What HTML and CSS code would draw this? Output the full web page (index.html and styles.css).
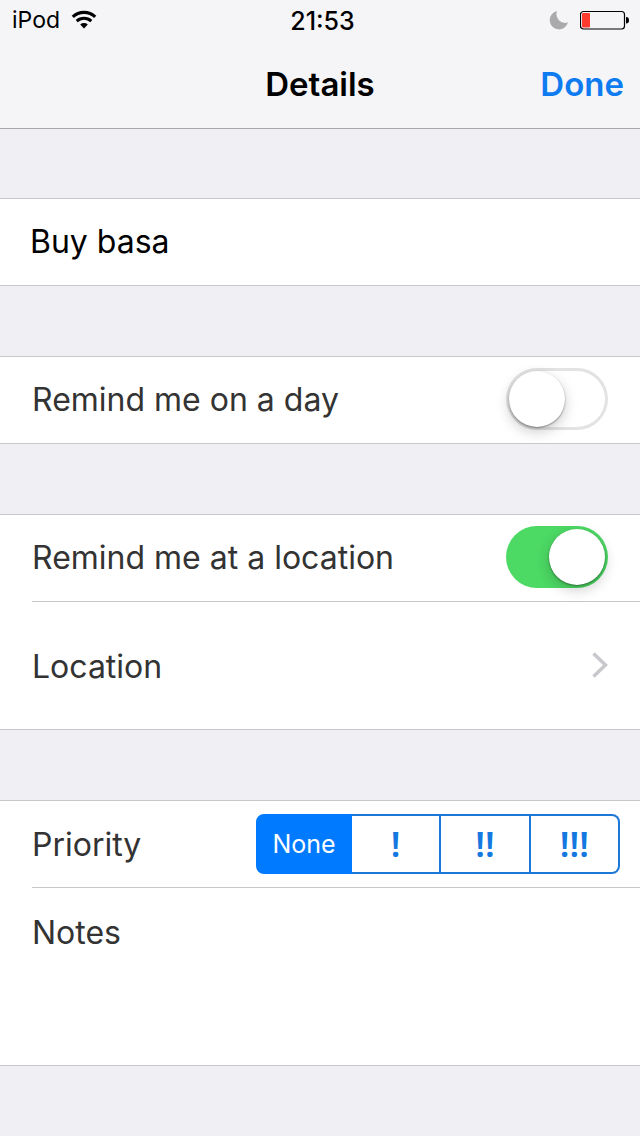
FILE: index.html
```html
<!DOCTYPE html>
<html lang="en">
<head>
<meta charset="utf-8">
<meta name="viewport" content="width=device-width, initial-scale=1">
<title>Details</title>
<link rel="stylesheet" href="styles.css">
</head>
<body>
<header class="header">
  <div class="status">
    <div class="status-left">
      <span>iPod</span>
      <svg class="wifi" width="26" height="20" viewBox="0 0 26 20" aria-hidden="true">
        <path d="M1.8 6.9a16.2 16.2 0 0 1 22.4 0" fill="none" stroke="#000" stroke-width="3.2"/>
        <path d="M5.7 11.1a10.6 10.6 0 0 1 14.6 0" fill="none" stroke="#000" stroke-width="3"/>
        <path d="M9.2 14.6a5.6 5.6 0 0 1 7.6 0L13 18.6z"/>
      </svg>
    </div>
    <time class="clock">21:53</time>
    <div class="status-right">
      <svg width="20" height="20" viewBox="0 0 20 20" aria-hidden="true">
        <path d="M8.1 1A9.3 9.3 0 1 0 19 12.3 8.6 8.6 0 0 1 8.1 1z" fill="#aaaaad"/>
      </svg>
      <svg width="50" height="20" viewBox="0 0 50 20" aria-hidden="true">
        <rect x="0.500" y="1.500" width="44" height="17.500" rx="3" fill="none" stroke="#000" stroke-width="1.2"/>
        <rect x="2" y="3" width="8" height="14.500" rx="1" fill="#ff3b30"/>
        <path d="M46 7q3 0 3 3.250t-3 3.250z"/>
      </svg>
    </div>
  </div>
  <nav class="navbar">
    <h1 class="title">Details</h1>
    <button class="done" type="button">Done</button>
  </nav>
</header>
<main class="form">
  <section class="group">
    <div class="row">
      <input class="name" type="text" value="Buy basa" aria-label="Title">
    </div>
  </section>
  <section class="group">
    <div class="row">
      <label class="label" for="day">Remind me on a day</label>
      <input class="switch" id="day" type="checkbox" role="switch">
    </div>
  </section>
  <section class="group">
    <div class="row">
      <label class="label" for="at-location">Remind me at a location</label>
      <input class="switch" id="at-location" type="checkbox" role="switch" checked>
    </div>
    <button class="row row-link" type="button">
      <span class="label">Location</span>
      <svg width="18" height="28" viewBox="0 0 18 28" aria-hidden="true">
        <path d="M3.500 1.500L15.500 13 3.500 24.500" fill="none" stroke="#c7c7cc" stroke-width="3.500"/>
      </svg>
    </button>
  </section>
  <section class="group">
    <div class="row row-priority" role="radiogroup" aria-labelledby="priority">
      <span class="label" id="priority">Priority</span>
      <div class="segments">
        <label class="segment segment-none"><input type="radio" name="priority" checked><span>None</span></label>
        <label class="segment"><input type="radio" name="priority"><span>!</span></label>
        <label class="segment"><input type="radio" name="priority"><span>!!</span></label>
        <label class="segment"><input type="radio" name="priority"><span>!!!</span></label>
      </div>
    </div>
    <div class="row row-notes">
      <label class="label" for="notes">Notes</label>
      <textarea class="notes" id="notes"></textarea>
    </div>
  </section>
</main>
</body>
</html>
```
FILE: styles.css
```css
* {
  box-sizing: border-box;
}

body {
  margin: 0;
  min-height: 100vh;
  background: #efeff4;
  color: #333;
  font: 32px/40px Inter, "Liberation Sans", sans-serif;
}

button,
input,
textarea {
  margin: 0;
  padding: 0;
  border: 0;
  background: none;
  color: inherit;
  font: inherit;
}

.header {
  background: #f5f5f8;
  border-bottom: 1px solid #a7a7ac;
  color: #000;
}

.status {
  display: grid;
  grid-template-columns: 1fr auto 1fr;
  align-items: center;
  height: 40px;
  padding: 0 10px 0 12px;
  font-size: 23px;
  line-height: 28px;
}

.status-left,
.status-right {
  display: flex;
  align-items: center;
  gap: 11px;
}

.status-right {
  justify-content: flex-end;
}

.clock {
  padding: 2px 0 0 3px;
  font-size: 25px;
  font-weight: 500;
}

.navbar {
  display: grid;
  grid-template-columns: 1fr auto 1fr;
  align-items: center;
  height: 88px;
  padding: 0 16px;
  font-size: 33px;
}

.title {
  grid-column: 2;
  margin: 0;
  font-size: inherit;
  font-weight: 600;
}

.done {
  justify-self: end;
  color: #0f7bf0;
  font-weight: 600;
}

.form {
  display: flex;
  flex-direction: column;
  gap: 70px;
  padding: 69px 0 70px;
}

.group {
  background: #fff;
  border-top: 1px solid #c8c7cc;
  border-bottom: 1px solid #c8c7cc;
}

.row {
  display: flex;
  align-items: center;
  justify-content: space-between;
  min-height: 86px;
  margin-left: 32px;
  padding: 0 32px 2px 0;
}

.row + .row {
  border-top: 1px solid #c8c7cc;
}

.label,
.name {
  padding-top: 2px;
}

.name {
  flex: 1;
  min-width: 0;
  margin-left: -2px;
  color: #000;
}

.row-link {
  width: calc(100% - 32px);
  min-height: 128px;
  padding-bottom: 0;
  text-align: left;
}

.switch {
  appearance: none;
  display: flex;
  flex: none;
  width: 102px;
  height: 62px;
  padding: 3px;
  border-radius: 31px;
  box-shadow: inset 0 0 0 3px #e3e3e3;
}

.switch::before {
  content: "";
  width: 56px;
  height: 56px;
  border-radius: 50%;
  background: #fff;
  box-shadow: 0 1px 2px rgba(0, 0, 0, 0.4), 0 5px 14px rgba(0, 0, 0, 0.2);
}

.switch:checked {
  justify-content: flex-end;
  background: #4cd964;
  box-shadow: none;
}

.row-priority {
  padding: 0 20px 0 0;
}

.segments {
  display: flex;
  width: 364px;
  height: 60px;
  color: #1478e0;
}

.segment {
  position: relative;
  display: flex;
  flex: 1;
  align-items: center;
  justify-content: center;
  border: 2px solid #1b78d8;
  border-left: 0;
  font: 600 35px/40px "Noto Sans", "Open Sans", sans-serif;
}

.segment:last-child {
  border-radius: 0 8px 8px 0;
}

.segment input {
  position: absolute;
  inset: 0;
  appearance: none;
}

.segment-none {
  flex: none;
  width: 96px;
  border: 2px solid #1b78d8;
  border-radius: 8px 0 0 8px;
  font: 25px/30px Inter, "Liberation Sans", sans-serif;
}

.segment:has(input:checked) {
  border-color: #007aff;
  background: #007aff;
  color: #fff;
}

.row-notes {
  align-items: flex-start;
  justify-content: flex-start;
  gap: 16px;
  min-height: 178px;
  padding-top: 23px;
}

.notes {
  flex: 1;
  min-width: 0;
  height: 128px;
  resize: none;
  outline: none;
}
```
